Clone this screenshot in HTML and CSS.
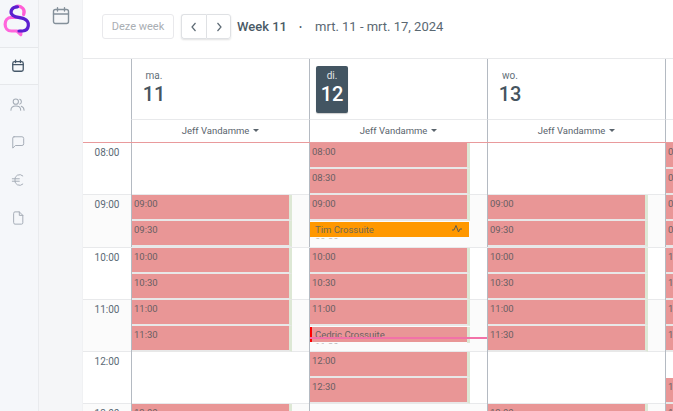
FILE: index.html
```html
<!DOCTYPE html>
<html lang="nl">
<head>
<meta charset="utf-8">
<title>Agenda</title>
<link rel="stylesheet" href="styles.css">
</head>
<body>
<div class="app">
  <nav class="rail">
    <div class="logo">
      <svg width="38" height="47" viewBox="0 0 38 47" fill="none" stroke-width="3.2" stroke-linecap="round" stroke-linejoin="round">
        <path d="M16.5 6.2A6.3 6 0 0 1 23.6 14.5" stroke="#ff5fd6"/>
        <path d="M20 17.3H11.5C3 17.3 3 31 11.5 31H17L20.8 34.6V31" stroke="#ff66dc"/>
        <path d="M17.5 6.8C11.5 6.8 9 12.5 13 15.6 16 18 20.5 17.3 24 18.8 30.5 21.5 29.5 30.5 22.5 31H19" stroke="#5b1fd0"/>
      </svg>
    </div>
    <a class="rail-item active">
      <svg class="ic" width="14" height="14" viewBox="0 0 16 16"><rect x="2" y="3" width="12" height="11" rx="2"/><path d="M2 6.5H14M5.2 1.2V4M10.8 1.2V4"/></svg>
    </a>
    <a class="rail-item">
      <svg class="ic muted" width="15" height="15" viewBox="0 0 16 16"><circle cx="6.2" cy="5" r="2.8"/><path d="M1 14C1 11 3 9.5 6.2 9.5S11.4 11 11.4 14M10.4 2.4A2.8 2.8 0 0 1 10.4 7.6M12 9.8C13.8 10.4 15 11.8 15 14"/></svg>
    </a>
    <a class="rail-item">
      <svg class="ic muted" width="14" height="14" viewBox="0 0 16 16"><path d="M3.5 2H12.5A2 2 0 0 1 14.5 4V10A2 2 0 0 1 12.5 12H5L2 15V3.5A1.5 1.5 0 0 1 3.5 2Z"/></svg>
    </a>
    <a class="rail-item">
      <svg class="ic muted" width="14" height="14" viewBox="0 0 16 16"><path d="M13.5 3.3A5.4 5.4 0 0 0 4.5 8 5.4 5.4 0 0 0 13.5 12.7M1.5 6.6H9.5M1.5 9.4H9.5"/></svg>
    </a>
    <a class="rail-item">
      <svg class="ic muted" width="14" height="14" viewBox="0 0 16 16"><path d="M3 2.5A1.5 1.5 0 0 1 4.5 1H9.5L13.5 5V13.5A1.5 1.5 0 0 1 12 15H4.5A1.5 1.5 0 0 1 3 13.5ZM9.5 1V5H13.5"/></svg>
    </a>
  </nav>
  <aside class="subrail">
    <svg class="ic sub" width="18" height="18" viewBox="0 0 18 18"><rect x="1.5" y="2.5" width="15" height="14" rx="2"/><path d="M1.5 7H16.5M5.5 .8V4M12.5 .8V4"/></svg>
  </aside>
  <main class="main">
    <header class="toolbar">
      <button class="btn ghost">Deze week</button>
      <div class="pager">
        <button class="btn page"><svg width="8" height="10" viewBox="0 0 8 10"><path d="M5.5 1 2 5l3.5 4"/></svg></button>
        <button class="btn page"><svg width="8" height="10" viewBox="0 0 8 10"><path d="M2.5 1 6 5 2.5 9"/></svg></button>
      </div>
      <strong class="week">Week 11</strong>
      <span class="dot">•</span>
      <span class="range">mrt. 11 - mrt. 17, 2024</span>
    </header>
    <section class="calendar">
      <div class="head-row">
        <div class="corner"></div>
        <div class="day"><div class="day-badge"><span class="dow">ma.</span><span class="num">11</span></div></div>
        <div class="day"><div class="day-badge today"><span class="dow">di.</span><span class="num">12</span></div></div>
        <div class="day"><div class="day-badge"><span class="dow">wo.</span><span class="num">13</span></div></div>
        <div class="day"></div>
      </div>
      <div class="res-row">
        <div class="corner"></div>
        <div class="res"><span>Jeff Vandamme</span><i class="caret"></i></div>
        <div class="res"><span>Jeff Vandamme</span><i class="caret"></i></div>
        <div class="res"><span>Jeff Vandamme</span><i class="caret"></i></div>
        <div class="res"></div>
      </div>
      <div class="body">
        <div class="hour">
          <div class="time">08:00</div>
          <div class="cell"></div>
          <div class="cell"><div class="slot">08:00</div><div class="slot">08:30</div></div>
          <div class="cell"></div>
          <div class="cell"><div class="slot">08:00</div><div class="slot">08:30</div></div>
        </div>
        <div class="hour alt">
          <div class="time">09:00</div>
          <div class="cell"><div class="slot">09:00</div><div class="slot">09:30</div></div>
          <div class="cell"><div class="slot">09:00</div><div class="event orange"><span class="ev-name">Tim Crossuite</span><span class="ev-time">09:30</span><svg class="pulse" width="12" height="10" viewBox="0 0 12 10"><path d="M1 6H3L5 1.5 7.5 8 9 5H11"/></svg></div></div>
          <div class="cell"><div class="slot">09:00</div><div class="slot">09:30</div></div>
          <div class="cell"><div class="slot">09:00</div><div class="slot">09:30</div></div>
        </div>
        <div class="hour">
          <div class="time">10:00</div>
          <div class="cell"><div class="slot">10:00</div><div class="slot">10:30</div></div>
          <div class="cell"><div class="slot">10:00</div><div class="slot">10:30</div></div>
          <div class="cell"><div class="slot">10:00</div><div class="slot">10:30</div></div>
          <div class="cell"><div class="slot">10:00</div><div class="slot">10:30</div></div>
        </div>
        <div class="hour alt">
          <div class="time">11:00</div>
          <div class="cell"><div class="slot">11:00</div><div class="slot">11:30</div></div>
          <div class="cell"><div class="slot">11:00</div><div class="event pink"><span class="ev-name">Cedric Crossuite</span><span class="ev-time">11:30</span></div><div class="now-line"></div></div>
          <div class="cell"><div class="slot">11:00</div><div class="slot">11:30</div></div>
          <div class="cell"><div class="slot">11:00</div><div class="slot">11:30</div></div>
        </div>
        <div class="hour">
          <div class="time">12:00</div>
          <div class="cell"></div>
          <div class="cell"><div class="slot">12:00</div><div class="slot">12:30</div></div>
          <div class="cell"></div>
          <div class="cell"><div class="slot empty"></div><div class="slot">12:30</div></div>
        </div>
        <div class="hour alt">
          <div class="time">13:00</div>
          <div class="cell"><div class="slot">13:00</div></div>
          <div class="cell"></div>
          <div class="cell"><div class="slot">13:00</div></div>
          <div class="cell"><div class="slot">13:00</div></div>
        </div>
      </div>
    </section>
  </main>
</div>
</body>
</html>
```
FILE: styles.css
```css
* { box-sizing: border-box; }
html, body { margin: 0; height: 100%; overflow: hidden; }
body { font-family: Roboto, "Liberation Sans", sans-serif; color: #46555f; background: #fff; }
.app { display: flex; width: 673px; height: 411px; overflow: hidden; }

.rail { width: 39px; flex: none; background: #f5f7fa; border-right: 1px solid #e9ebee; }
.logo { height: 48px; border-bottom: 1px solid #e6e8eb; }
.logo svg { display: block; }
.rail-item { height: 38px; display: flex; align-items: center; justify-content: center; padding-right: 3px; }
.rail-item.active { background: #f7f9fb; border-bottom: 1px solid #e6e8eb; height: 37px; }
.ic { fill: none; stroke: #47596a; stroke-width: 1.5; stroke-linecap: round; stroke-linejoin: round; }
.ic.muted { stroke: #a3abb5; stroke-width: 1.1; }
.ic.sub { stroke: #84909a; stroke-width: 1.4; }

.subrail { width: 44px; flex: none; background: #f5f6f8; padding: 7px 0 0 13px; border-right: 1px solid #f0f1f3; }

.main { flex: none; width: 590px; }
.toolbar { height: 58px; display: flex; align-items: center; padding: 0 0 5px 19px; }
.btn { font: 11px Roboto, sans-serif; background: #fff; border: 1px solid #e9e9ec; }
.ghost { width: 72px; height: 25px; padding: 0; border-radius: 3px; color: #a9aeb3; }
.pager { display: flex; margin-left: 7px; border-radius: 3px; box-shadow: 0 1px 2px rgba(0, 0, 0, .12); }
.page { width: 25px; height: 25px; padding: 0; display: flex; align-items: center; justify-content: center; border-color: #dfe1e4; }
.page:first-child { border-radius: 3px 0 0 3px; border-right: 0; }
.page:last-child { border-radius: 0 3px 3px 0; }
.page svg { fill: none; stroke: #5d6a74; stroke-width: 1.2; }
.week { margin-left: 6px; font-size: 13px; font-weight: 500; color: #4a5a66; }
.dot { margin-left: 12px; font-size: 9px; color: #4a5a66; }
.range { margin-left: 13px; font-size: 13px; color: #5a6872; }

.calendar { position: relative; }
.head-row, .res-row, .hour { display: grid; grid-template-columns: 48px 178px 178px 178px 8px; }
.head-row { height: 62px; border-top: 1px solid #e8e9eb; }
.day { border-left: 1px solid #b4bac2; padding: 7px 6px 0; border-bottom: 1px solid #e8e9eb; }
.day-badge { width: 32px; height: 47px; display: flex; flex-direction: column; align-items: center; border-radius: 2px; color: #46555f; }
.day-badge.today { background: #435562; color: #fff; box-shadow: 0 1px 1px rgba(0, 0, 0, .2); }
.dow { font-size: 10px; line-height: 12px; margin-top: 4px; opacity: .85; }
.num { font-size: 20px; font-weight: 500; line-height: 24px; }

.res-row { height: 23px; border-bottom: 1px solid #e99a9c; }
.res { border-left: 1px solid #b4bac2; display: flex; align-items: center; justify-content: center; font-size: 9.5px; color: #5a646d; padding-bottom: 1px; }
.caret { margin-left: 4px; border: 3px solid transparent; border-top-color: #5a646d; border-bottom: 0; }

.body { height: 269px; overflow: hidden; }
.hour { height: 52.25px; border-bottom: 1px solid #e8e9eb; background: #fff; }
.hour.alt { background: #fbfbfb; }
.time { text-align: center; font-size: 10px; line-height: 13px; padding-top: 3px; color: #5b6a76; }
.cell { position: relative; border-left: 1px solid #b4bac2; display: flex; flex-direction: column; min-width: 0; }
.slot, .event { flex: none; width: 160px; background: #e99696; border-right: 3px solid #dde8d5; font-size: 9.5px; color: #6a5f63; }
.slot { height: 26px; border-bottom: 2px solid #e8e8e8; line-height: 12px; padding: 3px 0 0 2px; }
.slot.empty { background: none; border: 0; }
.event { position: relative; height: 17px; margin-top: 1px; padding: 2px 0 0 5px; overflow: hidden; line-height: 12px; display: flex; flex-direction: column; }
.ev-name { flex: none; }
.ev-time { flex: none; opacity: .45; }
.orange { width: 159px; border-right: 0; color: #6f6a55; background: linear-gradient(#ff9800 15px, transparent 15px); }
.pink { border-image: linear-gradient(#dde8d5 15px, transparent 15px) 1; background: linear-gradient(90deg, #f00 2px, transparent 2px) 0 0 / 100% 15px no-repeat, linear-gradient(#e99696 15px, transparent 15px); }
.pulse { position: absolute; top: 2px; right: 6px; fill: none; stroke: #5c5a50; stroke-width: 1; }
.now-line { position: absolute; left: 0; right: 0; top: 37px; height: 2px; background: #f272a8; }
```
